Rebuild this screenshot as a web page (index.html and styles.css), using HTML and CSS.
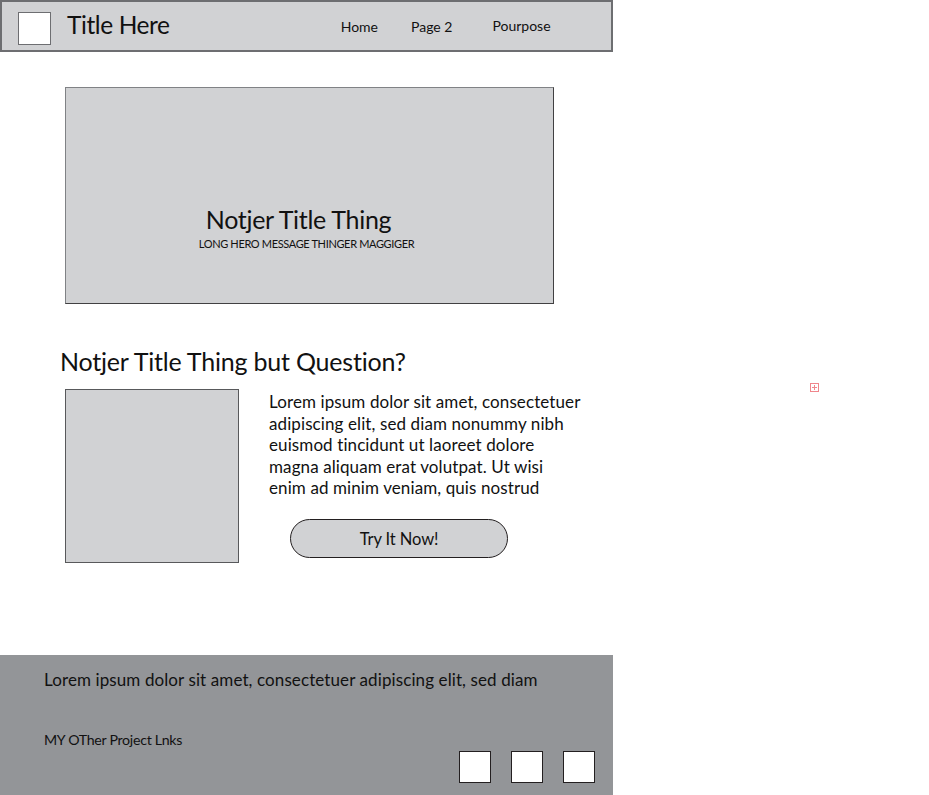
FILE: index.html
```html
<!DOCTYPE html>
<html lang="en">
<head>
<meta charset="utf-8">
<title>Title Here</title>
<link rel="stylesheet" href="styles.css">
</head>
<body>
<div class="page">
  <header class="topbar">
    <div class="logo"></div>
    <div class="site-title">Title Here</div>
    <nav class="nav">
      <a class="nav-home">Home</a>
      <a class="nav-page2">Page 2</a>
      <a class="nav-purpose">Pourpose</a>
    </nav>
  </header>

  <section class="hero">
    <h1 class="hero-title">Notjer Title Thing</h1>
    <p class="hero-sub">LONG HERO MESSAGE THINGER MAGGIGER</p>
  </section>

  <section class="feature">
    <h2 class="feature-title">Notjer Title Thing but Question?</h2>
    <div class="feature-body">
      <div class="feature-image"></div>
      <div class="feature-text">
        <p>Lorem ipsum dolor sit amet, consectetuer adipiscing elit, sed diam nonummy nibh euismod tincidunt ut laoreet dolore magna aliquam erat volutpat. Ut wisi enim ad minim veniam, quis nostrud</p>
        <button class="cta">Try It Now!</button>
      </div>
    </div>
  </section>

  <footer class="footer">
    <p class="footer-text">Lorem ipsum dolor sit amet, consectetuer adipiscing elit, sed diam</p>
    <div class="footer-row">
      <span class="footer-links">MY OTher Project Lnks</span>
      <div class="footer-icons">
        <div class="square"></div>
        <div class="square"></div>
        <div class="square"></div>
      </div>
    </div>
  </footer>
</div>
<div class="marker"></div>
</body>
</html>
```

FILE: styles.css
```css
* { box-sizing: border-box; }
html, body { margin: 0; padding: 0; background: #fff; }
body {
  font-family: Lato, "Open Sans", "Liberation Sans", sans-serif;
  color: #111;
  position: relative;
  width: 929px;
  height: 795px;
  overflow: hidden;
}
.page { width: 613px; }

.topbar {
  height: 52px;
  background: #d1d2d4;
  border: 2px solid #6d6e71;
  display: flex;
  align-items: center;
  padding-left: 16px;
}
.logo {
  width: 33px;
  height: 33px;
  background: #fff;
  border: 1px solid #6d6e71;
  margin-top: 5px;
}
.site-title {
  font-size: 24.5px;
  margin-left: 16px;
  letter-spacing: -0.4px;
  position: relative;
  top: -2px;
}
.nav {
  display: flex;
  margin-left: 171px;
  font-size: 14px;
}
.nav a { color: #111; }
.nav-page2 { margin-left: 33px; }
.nav-purpose { margin-left: 40px; position: relative; top: -1px; }

.hero {
  margin: 35px 0 0 65px;
  width: 489px;
  height: 217px;
  background: #d1d2d4;
  border: 1px solid #414042;
  border-left-color: #808285;
  border-top-color: #808285;
  padding-top: 116px;
  text-align: center;
  padding-right: 10px;
}
.hero-title {
  margin: 0;
  font-weight: 400;
  font-size: 25px;
  line-height: 30px;
  letter-spacing: -0.3px;
  padding-right: 12px;
}
.hero-sub {
  margin: 3px 0 0 0;
  font-size: 11px;
  letter-spacing: -0.35px;
  line-height: 14px;
  padding-left: 4px;
}

.feature { margin-top: 43px; }
.feature-title {
  margin: 0 0 0 60px;
  font-weight: 400;
  font-size: 25px;
  line-height: 30px;
  letter-spacing: -0.2px;
  position: relative;
  top: -1px;
}
.feature-body {
  display: flex;
  margin-top: 12px;
  padding-left: 65px;
}
.feature-image {
  width: 174px;
  height: 174px;
  background: #d1d2d4;
  border: 1px solid #58595b;
  flex: none;
}
.feature-text { margin-left: 30px; }
.feature-text p {
  margin: 2px 0 0 0;
  width: 313px;
  font-size: 17px;
  line-height: 21.5px;
  letter-spacing: 0.1px;
}
.cta {
  display: block;
  margin: 20px 0 0 21px;
  width: 218px;
  height: 39px;
  border-radius: 20px;
  background: #d1d2d4;
  border: 1px solid #231f20;
  font-family: inherit;
  font-size: 16.5px;
  color: #111;
  letter-spacing: -0.1px;
  padding-top: 2px;
}

.footer {
  margin-top: 92px;
  height: 140px;
  background: #939598;
  padding: 14px 18px 0 44px;
}
.footer-text {
  margin: 0;
  font-size: 17px;
  line-height: 22px;
  letter-spacing: 0.1px;
}
.footer-row {
  display: flex;
  justify-content: space-between;
  margin-top: 40px;
}
.footer-links {
  font-size: 14.2px;
  letter-spacing: -0.3px;
  line-height: 18px;
}
.footer-icons {
  display: flex;
  gap: 20px;
  margin-top: 20px;
}
.square {
  width: 32px;
  height: 32px;
  background: #fff;
  border: 1px solid #231f20;
}

.marker {
  position: absolute;
  left: 810px;
  top: 383px;
  width: 9px;
  height: 9px;
  border: 1px solid #f0868c;
}
.marker::before, .marker::after {
  content: "";
  position: absolute;
  background: #f0868c;
}
.marker::before { left: 1px; right: 1px; top: 3px; height: 1px; }
.marker::after { top: 1px; bottom: 1px; left: 3px; width: 1px; }
```
